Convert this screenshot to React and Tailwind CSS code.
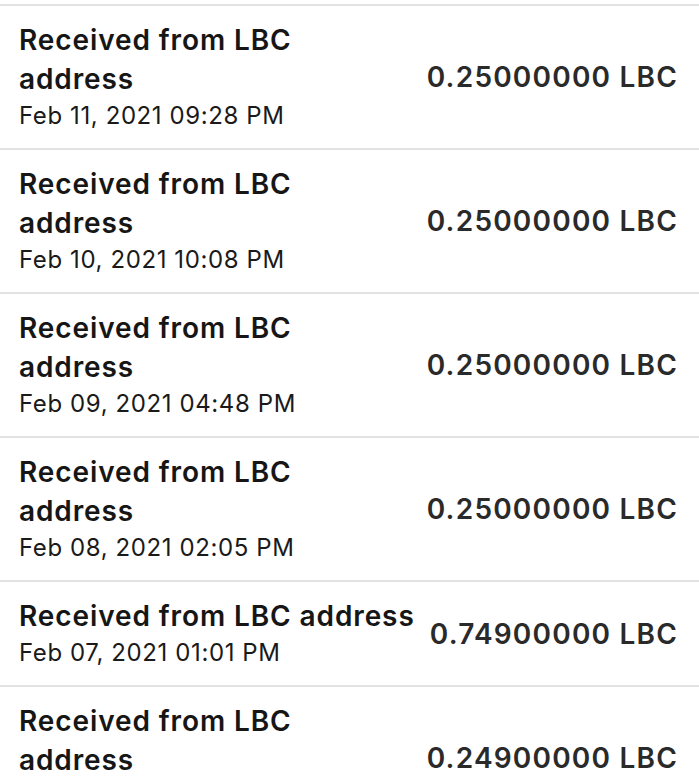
const rows = [
  { lines: ["Received from LBC", "address"], date: "Feb 11, 2021 09:28 PM", amount: "0.25000000 LBC" },
  { lines: ["Received from LBC", "address"], date: "Feb 10, 2021 10:08 PM", amount: "0.25000000 LBC" },
  { lines: ["Received from LBC", "address"], date: "Feb 09, 2021 04:48 PM", amount: "0.25000000 LBC" },
  { lines: ["Received from LBC", "address"], date: "Feb 08, 2021 02:05 PM", amount: "0.25000000 LBC" },
  { lines: ["Received from LBC address"], date: "Feb 07, 2021 01:01 PM", amount: "0.74900000 LBC" },
  { lines: ["Received from LBC", "address"], date: "Feb 06, 2021 11:41 AM", amount: "0.24900000 LBC" },
];

export default function App() {
  return (
    <div
      className="w-[699px] h-[780px] overflow-hidden bg-white pt-[4px]"
      style={{ fontFamily: "Inter, 'Noto Sans', sans-serif" }}
    >
      <div className="border-t-2 border-[#e2e2e2]">
        {rows.map((r, i) => (
          <div
            key={i}
            className="flex items-center justify-between pl-[19px] pr-[21px] py-[15px] border-b-2 border-[#e2e2e2]"
          >
            <div>
              {r.lines.map((l, j) => (
                <div key={j} className="text-[28px] leading-[39px] font-semibold text-[#161616] tracking-[0.9px] whitespace-nowrap">
                  {l}
                </div>
              ))}
              <div className="text-[24px] leading-[34px] text-[#1a1a1a] tracking-[0.6px] whitespace-nowrap">{r.date}</div>
            </div>
            <div className="text-[28px] font-semibold text-[#2a2a2a] tracking-[1.2px] whitespace-nowrap">{r.amount}</div>
          </div>
        ))}
      </div>
    </div>
  );
}
